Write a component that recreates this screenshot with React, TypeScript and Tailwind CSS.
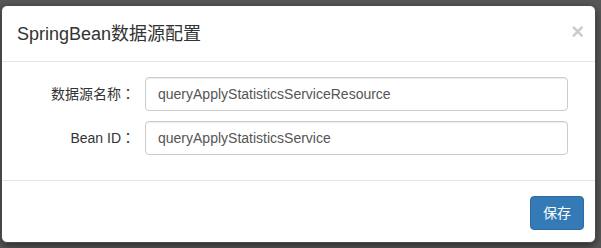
import React from "react";

const font = { fontFamily: '"Liberation Sans", "Noto Sans CJK SC", sans-serif' };

export default function App() {
  return (
    <div
      className="w-[601px] h-[248px] overflow-hidden bg-[#585858] pt-[5px] pl-[1px]"
      style={font}
    >
      <div className="w-[595px] rounded-[6px] border border-[#4a4a4a] bg-white shadow-[0_3px_9px_rgba(0,0,0,0.5)]">
        {/* header */}
        <div className="flex items-center justify-between border-b border-[#e5e5e5] px-[15px] h-[56px]">
          <h4 className="text-[18px] leading-[26px] text-[#333]">SpringBean数据源配置</h4>
          <button className="-mr-[4px] mb-[3px] text-[22px] font-bold leading-none text-[#000] opacity-20">
            ×
          </button>
        </div>

        {/* body */}
        <div className="pt-[15px] pb-[15px] pr-[27px]">
          <FormRow label="数据源名称" value="queryApplyStatisticsServiceResource" />
          <FormRow label="Bean ID" value="queryApplyStatisticsService" />
        </div>

        {/* footer */}
        <div className="flex justify-end border-t border-[#e5e5e5] pt-[15px] pb-[12px] pr-[11px]">
          <button className="h-[34px] w-[54px] rounded-[4px] border border-[#2e6da4] bg-[#337ab7] text-[14px] text-white">
            保存
          </button>
        </div>
      </div>
    </div>
  );
}

function FormRow({ label, value }: { label: string; value: string }) {
  return (
    <div className="flex items-center mb-[10px]">
      <label className="w-[143px] shrink-0 pr-[10px] text-right text-[14px] text-[#333]">
        {label}
        <span style={{ fontFamily: '"Noto Sans CJK TC", sans-serif' }}>：</span>
      </label>
      <input
        readOnly
        value={value}
        className="h-[34px] flex-1 rounded-[4px] border border-[#ccc] px-[12px] text-[14px] text-[#555] shadow-[inset_0_1px_1px_rgba(0,0,0,0.075)] outline-none"
        style={font}
      />
    </div>
  );
}
